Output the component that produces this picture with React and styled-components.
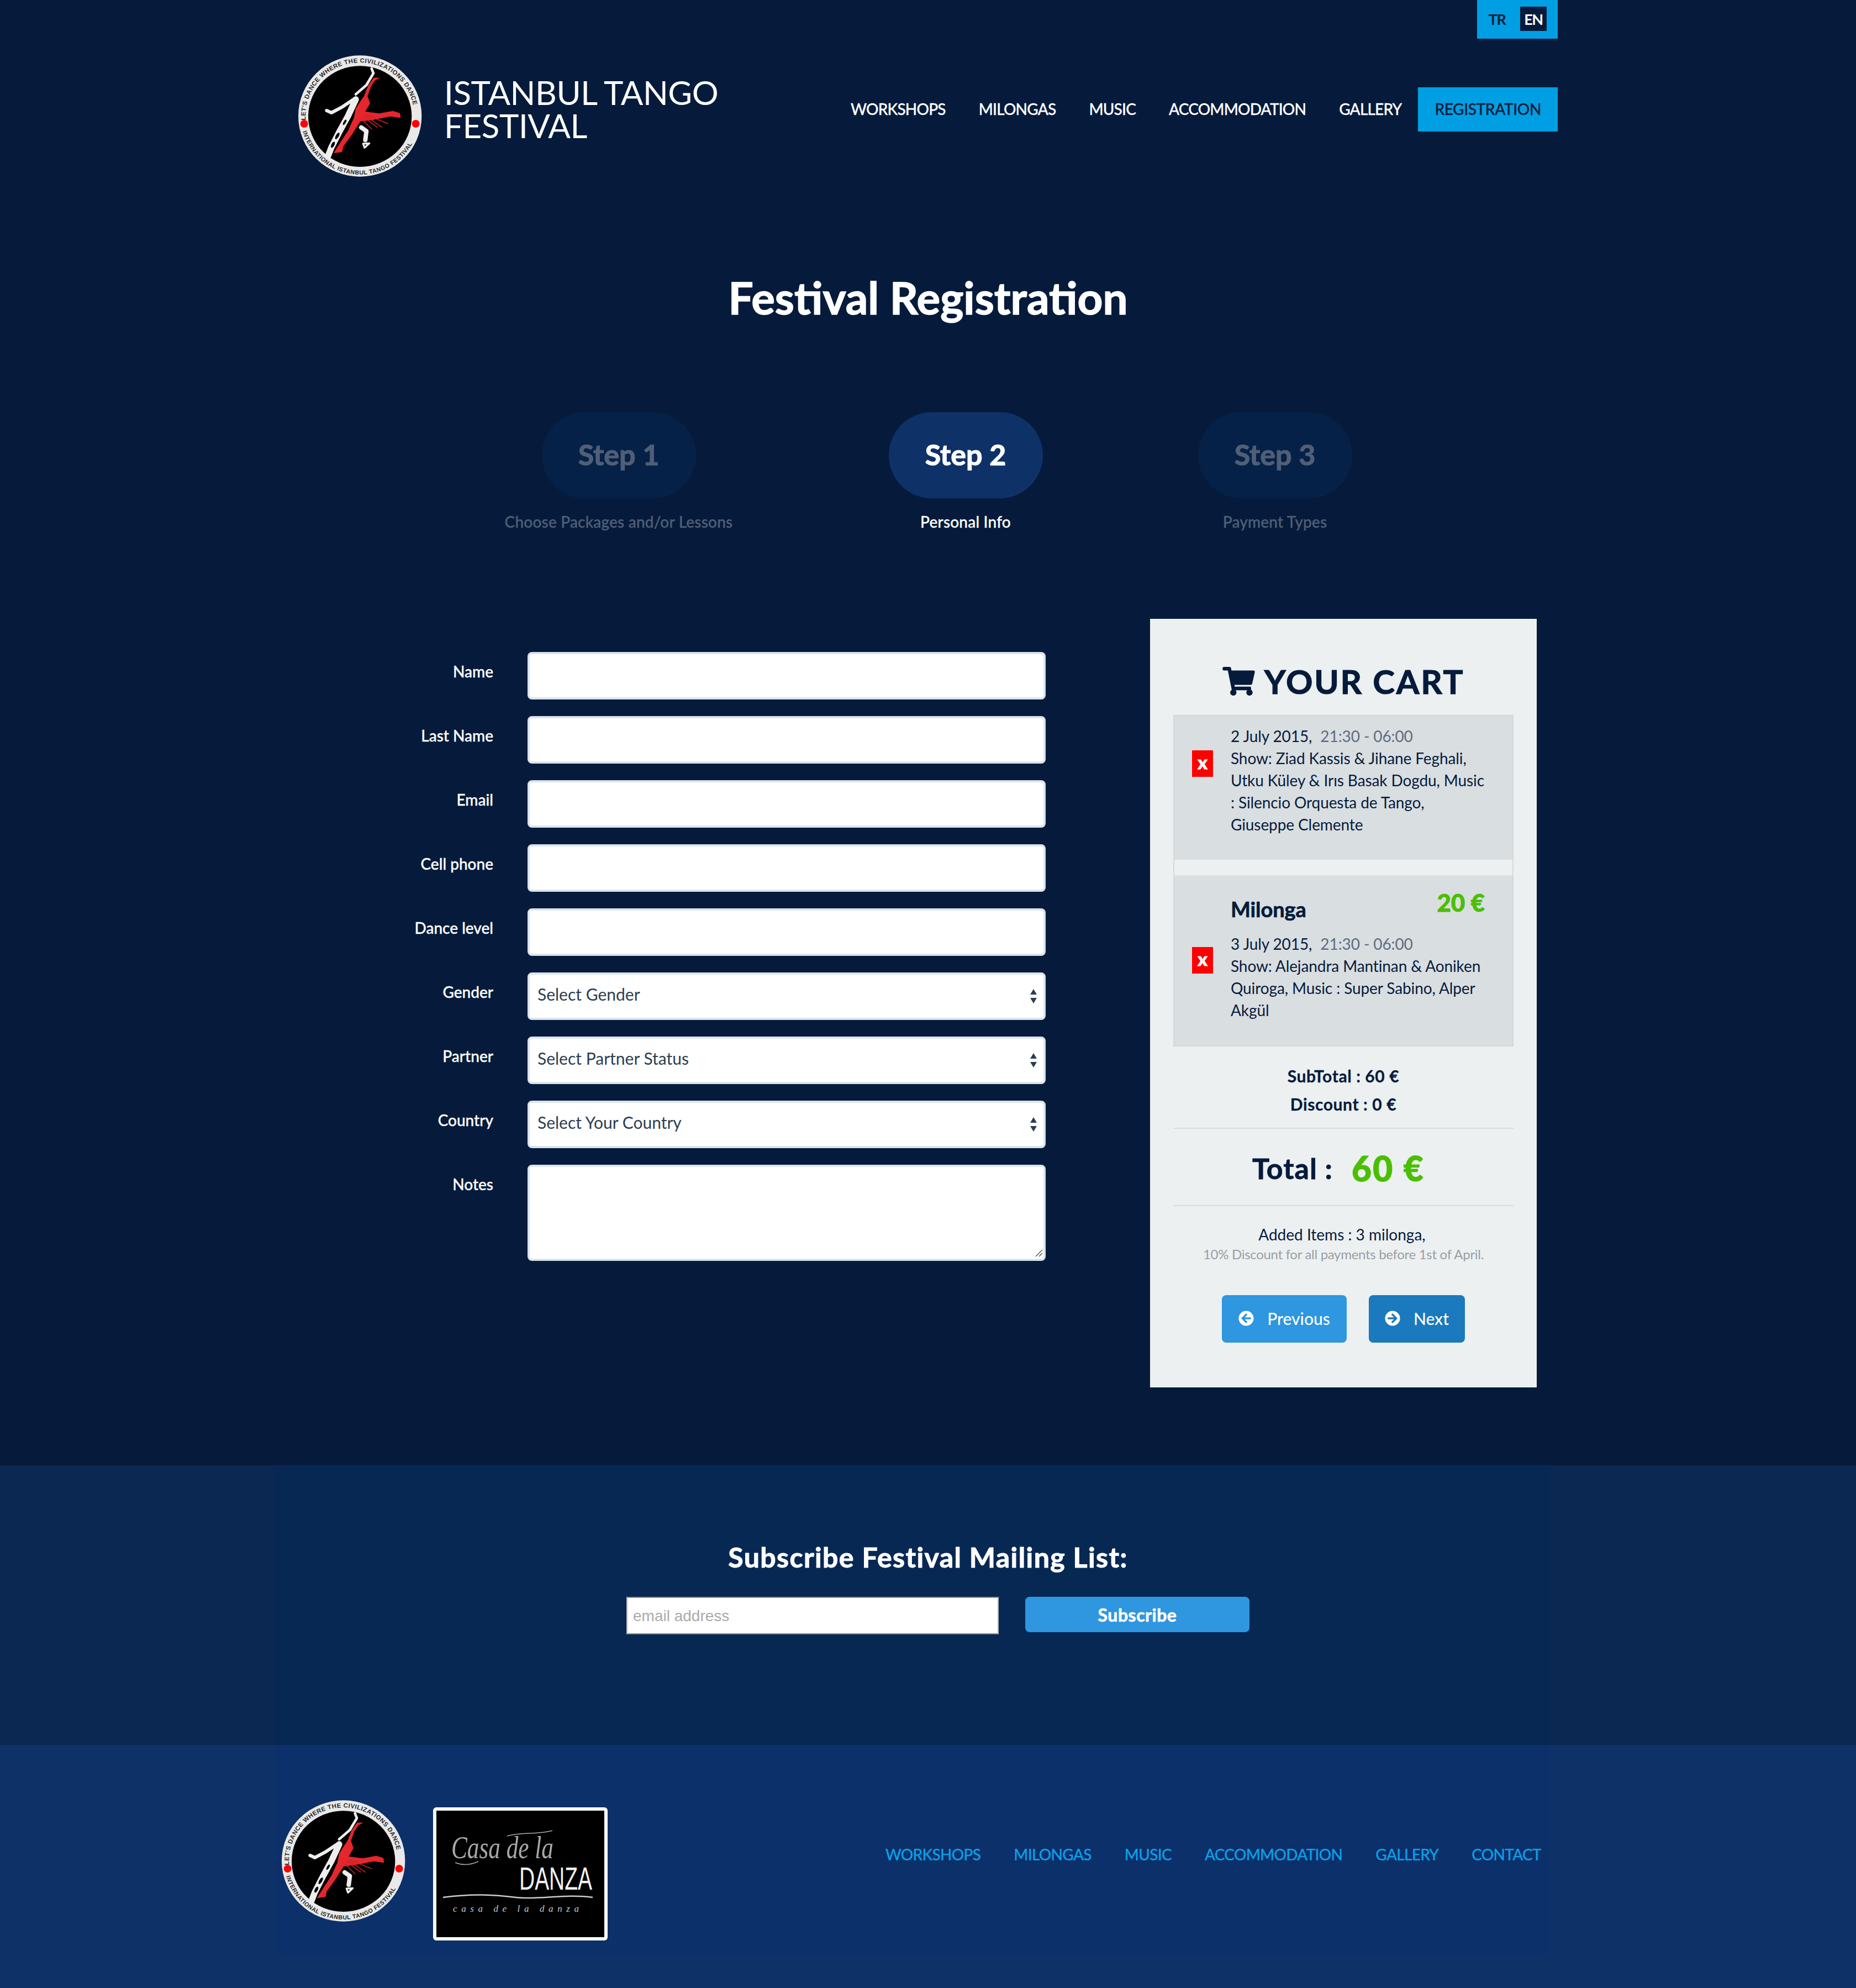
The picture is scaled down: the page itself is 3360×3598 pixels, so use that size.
import React from "react";
import styled, { createGlobalStyle } from "styled-components";
import { FaShoppingCart, FaArrowCircleLeft, FaArrowCircleRight } from "react-icons/fa";

const FONT = `Lato, "Open Sans", "Liberation Sans", sans-serif`;
const NAVY = "#061b3b";
const GREEN = "#4abf00";

const Global = createGlobalStyle`
  html, body { margin: 0; padding: 0; background: ${NAVY}; }
  body { font-family: ${FONT}; color: #fff; }
  * { box-sizing: border-box; }
`;

const Page = styled.div`
  width: 3360px;
  height: 3598px;
  background: ${NAVY};
  overflow: hidden;
`;

const Header = styled.header`
  padding: 0 540px;
  height: 320px;
`;
const LangBar = styled.div`
  display: flex;
  justify-content: flex-end;
  height: 70px;
`;
const LangBox = styled.div`
  width: 146px;
  height: 70px;
  background: #009fe3;
  display: flex;
  align-items: flex-start;
  padding: 12px 20px 0 12px;
  justify-content: space-between;
`;
const Lang = styled.a`
  width: 48px;
  height: 44px;
  display: flex;
  align-items: center;
  justify-content: center;
  font-size: 27px;
  font-weight: 700;
  letter-spacing: -1.5px;
  color: ${(p) => (p.$active ? "#fff" : NAVY)};
  background: ${(p) => (p.$active ? NAVY : "transparent")};
`;
const HeaderRow = styled.div`
  margin-top: 30px;
  display: flex;
  align-items: flex-start;
`;
const Brand = styled.div`
  display: flex;
  align-items: flex-start;
`;
const LogoWrap = styled.div`
  width: 224px;
  height: 220px;
  flex: none;
`;
const BrandName = styled.div`
  margin: 37px 0 0 40px;
  font-size: 60px;
  line-height: 60px;
  color: #fff;
  letter-spacing: -0.4px;
`;
const Nav = styled.nav`
  margin: 58px 0 0 auto;
  display: flex;
`;
const NavLink = styled.a`
  height: 80px;
  padding: 0 30px 3px;
  display: flex;
  align-items: center;
  font-size: 28px;
  font-weight: 500;
  letter-spacing: ${(p) => (p.$active ? "-0.35px" : "-0.8px")};
  -webkit-text-stroke: 0.3px currentColor;
  color: ${(p) => (p.$active ? NAVY : "#fff")};
  background: ${(p) => (p.$active ? "#009fe3" : "transparent")};
`;

const Title = styled.h1`
  margin: 178px 0 0;
  text-align: center;
  font-size: 80px;
  line-height: 80px;
  font-weight: 700;
  color: #fff;
  -webkit-text-stroke: 1.4px #fff;
`;

const Steps = styled.section`
  margin-top: 168px;
  padding-left: 806px;
  display: grid;
  grid-template-columns: 628px 628px 492px;
`;
const Step = styled.div`
  display: flex;
  flex-direction: column;
  align-items: center;
`;
const StepPill = styled.div`
  width: 279px;
  height: 156px;
  padding-bottom: 4px;
  border-radius: 78px;
  display: flex;
  align-items: center;
  justify-content: center;
  font-size: 52px;
  font-weight: 700;
  -webkit-text-stroke: 1.2px currentColor;
  background: ${(p) => (p.$active ? "#0e3268" : "#062148")};
  color: ${(p) => (p.$active ? "#fff" : "#4f5f77")};
`;
const StepCaption = styled.div`
  margin-top: 24px;
  font-size: 28px;
  line-height: 36px;
  font-weight: 500;
  letter-spacing: 0.2px;
  -webkit-text-stroke: 0.3px currentColor;
  color: ${(p) => (p.$active ? "#fff" : "#4f5f77")};
`;

const Main = styled.main`
  margin-top: 158px;
  padding-left: 540px;
  display: flex;
  align-items: flex-start;
`;
const Form = styled.form`
  width: 1353px;
  margin-right: 189px;
  padding-top: 60px;
  display: flex;
  flex-direction: column;
  gap: 30px;
`;
const Row = styled.div`
  display: grid;
  grid-template-columns: 353px 938px;
  column-gap: 62px;
  align-items: start;
`;
const Label = styled.label`
  padding-top: 17px;
  text-align: right;
  font-size: 28px;
  line-height: 36px;
  font-weight: 500;
  -webkit-text-stroke: 0.35px #fff;
  color: #fff;
`;
const fieldBase = `
  display: block;
  width: 938px;
  border: 4px solid #dce4ec;
  border-radius: 8px;
  background: #fff;
  outline: none;
  font-family: ${FONT};
  font-size: 30px;
  color: #2c3e50;
`;
const TextInput = styled.input`
  ${fieldBase}
  height: 86px;
`;
const SelectWrap = styled.div`
  position: relative;
  width: 938px;
`;
const Select = styled.select`
  ${fieldBase}
  height: 86px;
  padding: 0 14px 8px;
  appearance: none;
`;
const SelectArrows = styled.svg`
  position: absolute;
  right: 15px;
  top: 30px;
  width: 14px;
  height: 26px;
  pointer-events: none;
`;
const AreaWrap = styled.div`
  position: relative;
  width: 938px;
`;
const TextArea = styled.textarea`
  ${fieldBase}
  height: 174px;
  resize: none;
`;
const Grip = styled.svg`
  position: absolute;
  right: 5px;
  bottom: 7px;
  width: 14px;
  height: 14px;
`;

const Cart = styled.aside`
  width: 700px;
  height: 1391px;
  padding: 0 42px;
  background: #ecf0f1;
  color: ${NAVY};
`;
const CartTitle = styled.h2`
  margin: 0;
  padding-top: 52px;
  height: 174px;
  display: flex;
  align-items: center;
  justify-content: center;
  gap: 17px;
  font-size: 60px;
  line-height: 60px;
  font-weight: 700;
  letter-spacing: 2.8px;
  -webkit-text-stroke: 1.2px ${NAVY};
  color: ${NAVY};
`;
const CartIcon = styled(FaShoppingCart)`
  width: 59px;
  height: 52px;
`;
const CartList = styled.div`
  border: 2px solid #d5d8da;
`;
const Item = styled.div`
  display: flex;
  align-items: flex-start;
  height: ${(p) => p.$h}px;
  padding: ${(p) => p.$pad}px 0 0 32px;
  background: #d9dee1;
`;
const Spacer = styled.div`
  height: 30px;
  background: #ecf0f1;
  border-bottom: 2px solid #dfe2e3;
`;
const RemoveBtn = styled.div`
  flex: none;
  width: 38px;
  height: 48px;
  margin-top: ${(p) => p.$top}px;
  background: #ff0000;
  color: #fff;
  font-size: 33px;
  line-height: 42px;
  font-weight: 900;
  -webkit-text-stroke: 1px #fff;
  text-align: center;
`;
const ItemBody = styled.div`
  margin-left: 32px;
  width: 460px;
  white-space: nowrap;
  font-size: 28px;
  letter-spacing: -0.1px;
  line-height: 40px;
  color: ${NAVY};
`;
const Time = styled.span`
  margin-left: 8px;
  color: #5f6c80;
`;
const ItemHead = styled.div`
  display: flex;
  justify-content: space-between;
  align-items: flex-start;
  margin-bottom: 19px;
`;
const ItemName = styled.div`
  padding-top: 6px;
  font-size: 38px;
  line-height: 48px;
  font-weight: 700;
  -webkit-text-stroke: 0.7px ${NAVY};
`;
const ItemPrice = styled.div`
  margin-top: -6px;
  font-size: 44px;
  line-height: 48px;
  font-weight: 900;
  -webkit-text-stroke: 0.8px ${GREEN};
  color: ${GREEN};
`;
const Sub = styled.div`
  padding-top: 28px;
  padding-bottom: 17px;
  border-bottom: 2px solid #d9dde0;
  text-align: center;
  font-size: 30px;
  letter-spacing: 0.6px;
  line-height: 51px;
  font-weight: 700;
  -webkit-text-stroke: 0.3px ${NAVY};
`;
const TotalRow = styled.div`
  height: 140px;
  padding: 4px 18px 0 0;
  border-bottom: 2px solid #d9dde0;
  display: flex;
  align-items: center;
  justify-content: center;
  gap: 34px;
  font-size: 52px;
  letter-spacing: 1px;
  font-weight: 700;
  -webkit-text-stroke: 0.8px ${NAVY};
`;
const TotalValue = styled.span`
  font-size: 62px;
  letter-spacing: 2.4px;
  font-weight: 900;
  -webkit-text-stroke: 1.2px ${GREEN};
  color: ${GREEN};
`;
const Note = styled.div`
  margin-top: 32px;
  padding-right: 5px;
  text-align: center;
  font-size: 28px;
  line-height: 38px;
`;
const Fine = styled.div`
  text-align: center;
  font-size: 24px;
  letter-spacing: -0.3px;
  line-height: 34px;
  color: #9a9fa2;
`;
const Actions = styled.div`
  margin-top: 57px;
  display: flex;
  justify-content: center;
  gap: 40px;
`;
const ActionBtn = styled.a`
  height: 86px;
  width: ${(p) => p.$w}px;
  padding-bottom: 2px;
  display: flex;
  align-items: center;
  justify-content: center;
  gap: 24px;
  border-radius: 8px;
  background: ${(p) => p.$bg};
  color: #fff;
  font-size: 30px;
  font-weight: 500;
  svg { width: 28px; height: 28px; }
`;

const Subscribe = styled.section`
  margin-top: 141px;
  height: 506px;
  background: #0a2851;
`;
const SubscribeInner = styled.div`
  margin-left: 498px;
  width: 2308px;
  height: 506px;
  background: #082854;
  padding-top: 136px;
`;
const SubscribeTitle = styled.h3`
  margin: 0;
  padding-left: 56px;
  text-align: center;
  font-size: 50px;
  letter-spacing: 1.4px;
  line-height: 60px;
  font-weight: 700;
  color: #fff;
  -webkit-text-stroke: 1px #fff;
`;
const SubscribeForm = styled.div`
  margin-top: 42px;
  padding-left: 636px;
  display: flex;
  align-items: flex-start;
  gap: 48px;
`;
const EmailInput = styled.input`
  width: 674px;
  height: 68px;
  padding: 2px 10px 0;
  border: 2px solid #8a8a8a;
  border-left-color: #b9b9b9;
  border-right-color: #b9b9b9;
  background: #fff;
  outline: none;
  font-family: "Liberation Sans", Arial, sans-serif;
  font-size: 28px;
  &::placeholder { color: #aaa; opacity: 1; }
`;
const SubscribeBtn = styled.button`
  width: 406px;
  height: 64px;
  border: 0;
  border-radius: 8px;
  background: #2f96e0;
  color: #fff;
  font-family: ${FONT};
  font-size: 32px;
  letter-spacing: 0.5px;
  font-weight: 700;
  -webkit-text-stroke: 0.7px #fff;
`;

const Footer = styled.footer`
  height: 440px;
  background: #0e3268;
`;
const FooterInner = styled.div`
  margin-left: 498px;
  width: 2308px;
  height: 380px;
  padding: 100px 16px 0 12px;
  background: #0b306a;
  display: flex;
  align-items: flex-start;
`;
const CasaLogo = styled.div`
  margin: 13px 0 0 50px;
  width: 316px;
  height: 241px;
  flex: none;
  border: 6px solid #fff;
  border-radius: 6px;
  background: #000;
  svg { display: block; width: 304px; height: 229px; }
`;
const FooterNav = styled.nav`
  margin: 78px 0 0 auto;
  display: flex;
`;
const FooterLink = styled.a`
  padding: 0 30px;
  font-size: 28px;
  line-height: 40px;
  font-weight: 500;
  letter-spacing: -0.7px;
  -webkit-text-stroke: 0.2px currentColor;
  color: #0aa0e6;
  &:last-child { padding-right: 0; }
`;

function Logo({ id }) {
  return (
    <svg viewBox="60 60 672 660" width="224" height="220" style={{ display: "block" }}>
      <defs>
        <path id={`${id}-top`} d="M 99.7 412 A 296 292 0 1 1 690.3 412" />
        <path id={`${id}-bot`} d="M 81.4 462 A 322 318 0 0 0 708.6 462" />
      </defs>
      <ellipse cx="395" cy="390" rx="335" ry="329" fill="#e9e9e9" />
      <ellipse cx="395" cy="392" rx="281" ry="274" fill="#000" />
      <text fontFamily="'Liberation Sans', sans-serif" fontWeight="700" fontSize="34" letterSpacing="1.5" fill="#2a2a2a">
        <textPath href={`#${id}-top`}>LET'S DANCE WHERE THE CIVILIZATIONS DANCE</textPath>
      </text>
      <text fontFamily="'Liberation Sans', sans-serif" fontWeight="700" fontSize="32" letterSpacing="1.5" fill="#2a2a2a">
        <textPath href={`#${id}-bot`} startOffset="12">INTERNATIONAL ISTANBUL TANGO FESTIVAL</textPath>
      </text>
      <circle cx="92" cy="432" r="21" fill="#f00" />
      <circle cx="698" cy="432" r="21" fill="#f00" />
      {/* partner, white */}
      <g fill="none" stroke="#eee" strokeLinecap="round" strokeLinejoin="round">
        <path d="M458 132 L468 158 L430 222 L372 272" strokeWidth="14" />
        <path d="M214 360 L240 372 L300 340 L372 292" strokeWidth="18" />
        <path d="M372 300 L330 390 L286 470 L240 560 L222 606" strokeWidth="34" />
        <path d="M402 452 L430 472 L424 520" strokeWidth="24" />
        <path d="M412 540 L446 538 L420 562 Z" strokeWidth="10" />
      </g>
      <g fill="#000">
        <ellipse cx="272" cy="498" rx="8" ry="20" transform="rotate(30 272 498)" />
        <ellipse cx="248" cy="546" rx="8" ry="18" transform="rotate(28 248 546)" />
        <ellipse cx="312" cy="424" rx="6" ry="16" transform="rotate(30 312 424)" />
      </g>
      {/* dancer, red */}
      <g fill="#e5262c">
        <path d="M504 182 L470 182 L440 224 L418 280 L396 312 L372 350 L362 400 L330 470 L284 540 L252 592 L298 586 L304 556 L352 490 L396 420 L470 410 L560 392 L616 400 L612 374 L574 362 L500 376 L424 366 L450 320 L436 282 L456 226 L478 196 Z" />
      </g>
      <g stroke="#c9222a" strokeWidth="5" fill="none">
        <path d="M410 392 L490 452" />
        <path d="M420 386 L516 452" />
        <path d="M430 384 L548 432" />
        <path d="M404 406 L460 462" />
      </g>
    </svg>
  );
}

function CasaArt() {
  return (
    <svg viewBox="6 6 304 229">
      <text x="33" y="92" fontFamily="'Liberation Serif', serif" fontStyle="italic" fontSize="58" fill="#a8a8a8" textLength="185" lengthAdjust="spacingAndGlyphs">Casa de la</text>
      <path d="M40 100 Q60 108 82 98" fill="none" stroke="#aaa" strokeWidth="1.5" />
      <path d="M134 52 C160 44 190 50 216 42" fill="none" stroke="#aaa" strokeWidth="1.5" />
      <text x="156" y="149" fontFamily="'Liberation Sans', sans-serif" fontSize="58" fill="#f2f2f2" textLength="132" lengthAdjust="spacingAndGlyphs">DANZA</text>
      <path d="M18 163 C70 156 110 158 150 163 C190 168 240 156 289 163" fill="none" stroke="#ccc" strokeWidth="2.5" />
      <text x="36" y="189" fontFamily="'Liberation Serif', serif" fontStyle="italic" fontSize="17" fill="#ccc" textLength="228">casa de la danza</text>
    </svg>
  );
}

const FIELDS = ["Name", "Last Name", "Email", "Cell phone", "Dance level"];
const SELECTS = [
  ["Gender", "Select Gender"],
  ["Partner", "Select Partner Status"],
  ["Country", "Select Your Country"],
];
const NAV = ["WORKSHOPS", "MILONGAS", "MUSIC", "ACCOMMODATION", "GALLERY"];

export default function App() {
  return (
    <Page>
      <Global />
      <Header>
        <LangBar>
          <LangBox>
            <Lang>TR</Lang>
            <Lang $active>EN</Lang>
          </LangBox>
        </LangBar>
        <HeaderRow>
          <Brand>
            <LogoWrap><Logo id="head" /></LogoWrap>
            <BrandName>ISTANBUL TANGO<br />FESTIVAL</BrandName>
          </Brand>
          <Nav>
            {NAV.map((n) => <NavLink key={n}>{n}</NavLink>)}
            <NavLink $active>REGISTRATION</NavLink>
          </Nav>
        </HeaderRow>
      </Header>

      <Title>Festival Registration</Title>

      <Steps>
        <Step>
          <StepPill>Step 1</StepPill>
          <StepCaption>Choose Packages and/or Lessons</StepCaption>
        </Step>
        <Step>
          <StepPill $active>Step 2</StepPill>
          <StepCaption $active>Personal Info</StepCaption>
        </Step>
        <Step>
          <StepPill>Step 3</StepPill>
          <StepCaption>Payment Types</StepCaption>
        </Step>
      </Steps>

      <Main>
        <Form>
          {FIELDS.map((f) => (
            <Row key={f}>
              <Label>{f}</Label>
              <TextInput />
            </Row>
          ))}
          {SELECTS.map(([l, o]) => (
            <Row key={l}>
              <Label>{l}</Label>
              <SelectWrap>
                <Select defaultValue={o}><option>{o}</option></Select>
                <SelectArrows viewBox="0 0 14 26">
                  <path d="M7 0 L13 10 H1 Z M1 16 H13 L7 26 Z" fill="#2c3e50" />
                </SelectArrows>
              </SelectWrap>
            </Row>
          ))}
          <Row>
            <Label>Notes</Label>
            <AreaWrap>
              <TextArea />
              <Grip viewBox="0 0 14 14">
                <path d="M13 1 L1 13 M13 7 L7 13" stroke="#555" strokeWidth="1.5" fill="none" />
              </Grip>
            </AreaWrap>
          </Row>
        </Form>

        <Cart>
          <CartTitle><CartIcon />YOUR CART</CartTitle>
          <CartList>
            <Item $h={260} $pad={16}>
              <RemoveBtn $top={46}>x</RemoveBtn>
              <ItemBody>
                2 July 2015, <Time>21:30 - 06:00</Time><br />
                Show: Ziad Kassis &amp; Jihane Feghali,<br />
                Utku Küley &amp; Irıs Basak Dogdu, Music<br />
                : Silencio Orquesta de Tango,<br />
                Giuseppe Clemente
              </ItemBody>
            </Item>
            <Spacer />
            <Item $h={306} $pad={29}>
              <RemoveBtn $top={99}>x</RemoveBtn>
              <ItemBody>
                <ItemHead>
                  <ItemName>Milonga</ItemName>
                  <ItemPrice>20 €</ItemPrice>
                </ItemHead>
                3 July 2015, <Time>21:30 - 06:00</Time><br />
                Show: Alejandra Mantinan &amp; Aoniken<br />
                Quiroga, Music : Super Sabino, Alper<br />
                Akgül
              </ItemBody>
            </Item>
          </CartList>
          <Sub>SubTotal : 60 €<br />Discount : 0 €</Sub>
          <TotalRow>Total : <TotalValue>60 €</TotalValue></TotalRow>
          <Note>Added Items : 3 milonga,</Note>
          <Fine>10% Discount for all payments before 1st of April.</Fine>
          <Actions>
            <ActionBtn $w={226} $bg="#2f96e0"><FaArrowCircleLeft />Previous</ActionBtn>
            <ActionBtn $w={174} $bg="#1a7abd"><FaArrowCircleRight />Next</ActionBtn>
          </Actions>
        </Cart>
      </Main>

      <Subscribe>
        <SubscribeInner>
          <SubscribeTitle>Subscribe Festival Mailing List:</SubscribeTitle>
          <SubscribeForm>
            <EmailInput placeholder="email address" />
            <SubscribeBtn type="button">Subscribe</SubscribeBtn>
          </SubscribeForm>
        </SubscribeInner>
      </Subscribe>

      <Footer>
        <FooterInner>
          <LogoWrap><Logo id="foot" /></LogoWrap>
          <CasaLogo><CasaArt /></CasaLogo>
          <FooterNav>
            {[...NAV, "CONTACT"].map((n) => <FooterLink key={n}>{n}</FooterLink>)}
          </FooterNav>
        </FooterInner>
      </Footer>
    </Page>
  );
}
